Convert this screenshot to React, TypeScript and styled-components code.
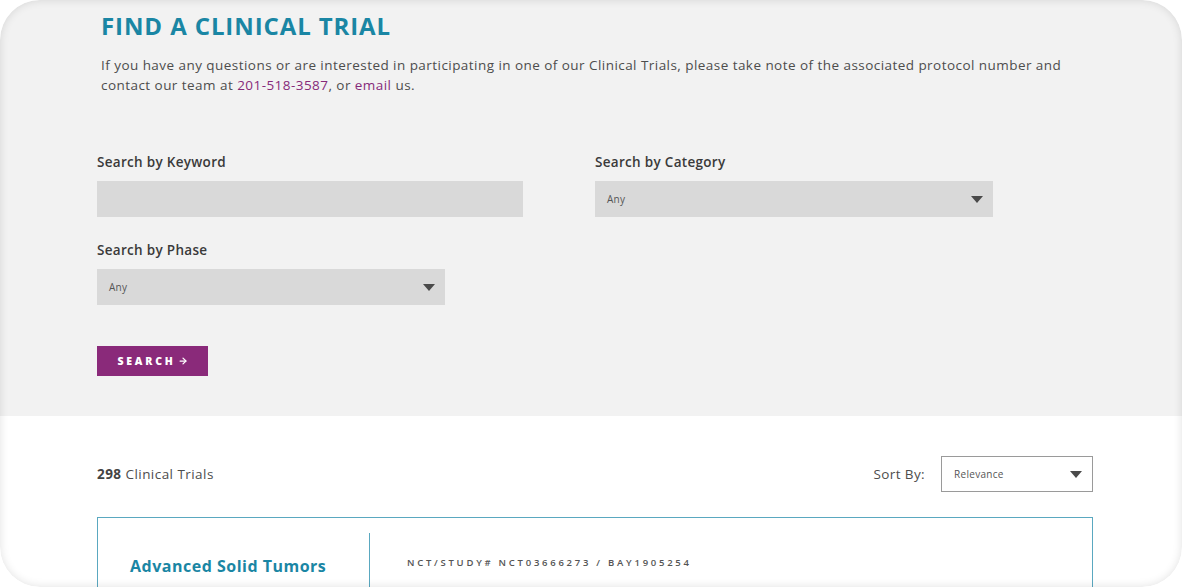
import styled, { createGlobalStyle } from "styled-components";
import { ArrowRight } from "lucide-react";

const GlobalStyle = createGlobalStyle`
  html, body {
    margin: 0;
    padding: 0;
    background: #ffffff;
  }
  * {
    box-sizing: border-box;
  }
`;

const font = `"Open Sans", "Liberation Sans", Arial, sans-serif`;

const Frame = styled.div`
  position: relative;
  width: 1182px;
  height: 587px;
  border-radius: 40px;
  overflow: hidden;
  background: #ffffff;
  font-family: ${font};

  &::after {
    content: "";
    position: absolute;
    inset: 0;
    border-radius: 40px;
    box-shadow: inset 0 0 10px rgba(0, 0, 0, 0.12);
    pointer-events: none;
  }
`;

const SearchSection = styled.section`
  background: #f2f2f2;
  height: 416px;
  padding: 10px 89px 0 97px;
`;

const Title = styled.h1`
  margin: 0 0 0 4px;
  font-family: ${font};
  font-size: 24px;
  line-height: 32px;
  font-weight: 700;
  letter-spacing: 0.9px;
  color: #1a86a4;
`;

const Intro = styled.p`
  margin: 13px 0 0 4px;
  max-width: 975px;
  font-size: 13.5px;
  line-height: 20px;
  color: #4d4d4d;
  letter-spacing: 0.45px;
`;

const Link = styled.a`
  color: #862a7a;
  text-decoration: none;
`;

const FieldsGrid = styled.div`
  display: grid;
  grid-template-columns: 498px 498px;
  row-gap: 23px;
  margin-top: 57px;
`;

const Field = styled.div`
  display: flex;
  flex-direction: column;
  gap: 9px;
`;

const Label = styled.label`
  font-size: 13.5px;
  line-height: 20px;
  font-weight: 600;
  letter-spacing: 0.3px;
  color: #3a3a3a;
`;

const TextInput = styled.div<{ $width: number }>`
  width: ${(p) => p.$width}px;
  height: 36px;
  background: #d9d9d9;
`;

const SelectBox = styled.div<{ $width: number; $light?: boolean }>`
  width: ${(p) => p.$width}px;
  height: 36px;
  background: ${(p) => (p.$light ? "#ffffff" : "#d9d9d9")};
  border: ${(p) => (p.$light ? "1px solid #9a9a9a" : "none")};
  display: flex;
  align-items: center;
  justify-content: space-between;
  padding: 0 10px 0 12px;
  font-size: 10px;
  letter-spacing: 0.3px;
  color: #555555;
`;

const Caret = styled.span`
  width: 0;
  height: 0;
  border-left: 6px solid transparent;
  border-right: 6px solid transparent;
  border-top: 7px solid #4a4a4a;
`;

const SearchButton = styled.button`
  margin-top: 41px;
  width: 111px;
  height: 30px;
  border: none;
  background: #8a2a7a;
  color: #ffffff;
  font-family: ${font};
  font-size: 10.5px;
  font-weight: 800;
  letter-spacing: 2.8px;
  display: flex;
  align-items: center;
  justify-content: center;
  gap: 2px;
  padding: 0;
`;

const ResultsSection = styled.section`
  padding: 40px 89px 0 97px;
`;

const ResultsBar = styled.div`
  display: flex;
  align-items: center;
  justify-content: space-between;
  height: 36px;
`;

const Count = styled.div`
  font-size: 13.5px;
  letter-spacing: 0.45px;
  color: #4d4d4d;

  b {
    font-weight: 700;
    color: #444;
  }
`;

const SortGroup = styled.div`
  display: flex;
  align-items: center;
  gap: 16px;
  font-size: 13.5px;
  letter-spacing: 0.4px;
  color: #4d4d4d;
`;

const TrialCard = styled.article`
  margin-top: 25px;
  height: 120px;
  border: 1px solid #5aa8c0;
  border-bottom: none;
  display: flex;
  padding-top: 15px;
`;

const TrialName = styled.div`
  width: 272px;
  padding: 22px 0 0 32px;
  font-size: 16px;
  font-weight: 700;
  letter-spacing: 0.5px;
  color: #1a86a4;
  border-right: 1px solid #5aa8c0;
`;

const TrialMeta = styled.div`
  padding: 23px 0 0 37px;
  font-size: 9.5px;
  font-weight: 600;
  letter-spacing: 2.75px;
  color: #555555;
`;

export default function App() {
  return (
    <>
      <GlobalStyle />
      <Frame>
        <SearchSection>
          <Title>FIND A CLINICAL TRIAL</Title>
          <Intro>
            If you have any questions or are interested in participating in one of our Clinical Trials, please take
            note of the associated protocol number and contact our team at <Link href="#">201-518-3587</Link>, or{" "}
            <Link href="#">email</Link> us.
          </Intro>
          <FieldsGrid>
            <Field>
              <Label>Search by Keyword</Label>
              <TextInput $width={426} />
            </Field>
            <Field>
              <Label>Search by Category</Label>
              <SelectBox $width={398}>
                Any
                <Caret />
              </SelectBox>
            </Field>
            <Field>
              <Label>Search by Phase</Label>
              <SelectBox $width={348}>
                Any
                <Caret />
              </SelectBox>
            </Field>
          </FieldsGrid>
          <SearchButton>
            SEARCH <ArrowRight size={10} strokeWidth={3} />
          </SearchButton>
        </SearchSection>
        <ResultsSection>
          <ResultsBar>
            <Count>
              <b>298</b> Clinical Trials
            </Count>
            <SortGroup>
              Sort By:
              <SelectBox $width={152} $light>
                Relevance
                <Caret />
              </SelectBox>
            </SortGroup>
          </ResultsBar>
          <TrialCard>
            <TrialName>Advanced Solid Tumors</TrialName>
            <TrialMeta>NCT/STUDY# NCT03666273 / BAY1905254</TrialMeta>
          </TrialCard>
        </ResultsSection>
      </Frame>
    </>
  );
}
